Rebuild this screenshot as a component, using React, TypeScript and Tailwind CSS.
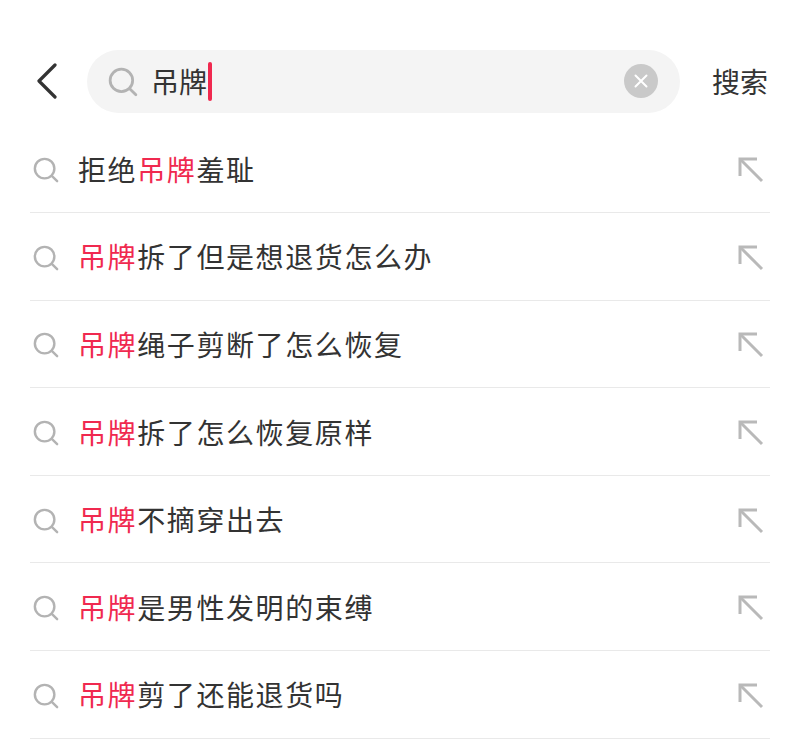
const FONT = '"Noto Sans CJK SC", "Noto Sans", sans-serif';

const ROWS = [
  { before: "拒绝", after: "羞耻" },
  { before: "", after: "拆了但是想退货怎么办" },
  { before: "", after: "绳子剪断了怎么恢复" },
  { before: "", after: "拆了怎么恢复原样" },
  { before: "", after: "不摘穿出去" },
  { before: "", after: "是男性发明的束缚" },
  { before: "", after: "剪了还能退货吗" },
];

function SearchIcon({ size }: { size: number }) {
  return (
    <svg width={size} height={size} viewBox="0 0 28 28" fill="none" stroke="#b3b3b3" strokeWidth="2.6" strokeLinecap="round">
      <circle cx="12.5" cy="12.5" r="10.5" />
      <path d="M20.5 20.5 L26 26" />
    </svg>
  );
}

function FillArrow() {
  return (
    <svg width="26" height="26" viewBox="0 0 26 26" fill="none" stroke="#b9b9b9" strokeWidth="3">
      <path d="M24 24 L3 3" />
      <path d="M2 19 V2 H19" />
    </svg>
  );
}

export default function App() {
  return (
    <div className="h-[752px] w-[800px] overflow-hidden bg-white" style={{ fontFamily: FONT }}>
      {/* Search bar */}
      <div className="flex h-[132px] items-center pt-[30px] pl-[36px] pr-[32px]">
        <svg width="22" height="36" viewBox="0 0 22 36" fill="none" stroke="#333" strokeWidth="3.2" strokeLinecap="round" strokeLinejoin="round">
          <path d="M19 2 L3 18 L19 34" />
        </svg>
        <div className="ml-[29px] flex h-[63px] w-[593px] items-center rounded-full bg-[#f4f4f4] pl-[21px] pr-[22px]">
          <div className="mt-[2px]">
            <SearchIcon size={30} />
          </div>
          <span className="ml-[13px] text-[28px] leading-none text-[#333]">吊牌</span>
          <span className="ml-px mt-px h-[39px] w-[4px] rounded-sm bg-[#f0294f]" />
          <div className="ml-auto flex h-[34px] w-[34px] items-center justify-center rounded-full bg-[#c9c9c9]">
            <svg width="14" height="14" viewBox="0 0 14 14" stroke="#fff" strokeWidth="2" strokeLinecap="round">
              <path d="M1.5 1.5 L12.5 12.5 M12.5 1.5 L1.5 12.5" />
            </svg>
          </div>
        </div>
        <span className="ml-auto text-[28px] leading-none text-[#333]">搜索</span>
      </div>

      {/* Suggestions */}
      <div className="mx-[30px] -mt-[6.5px]">
        {ROWS.map((row) => (
          <div key={row.after} className="flex h-[87.6px] items-center border-b border-[#e9e9e9] pl-[3px] pr-[6px]">
            <div className="mt-[3px]">
              <SearchIcon size={26} />
            </div>
            <span className="ml-[19px] text-[28px] leading-none tracking-[1.6px] text-[#333]">
              {row.before}
              <span className="text-[#f0294f]">吊牌</span>
              {row.after}
            </span>
            <div className="ml-auto mt-[3px]">
              <FillArrow />
            </div>
          </div>
        ))}
      </div>
    </div>
  );
}
